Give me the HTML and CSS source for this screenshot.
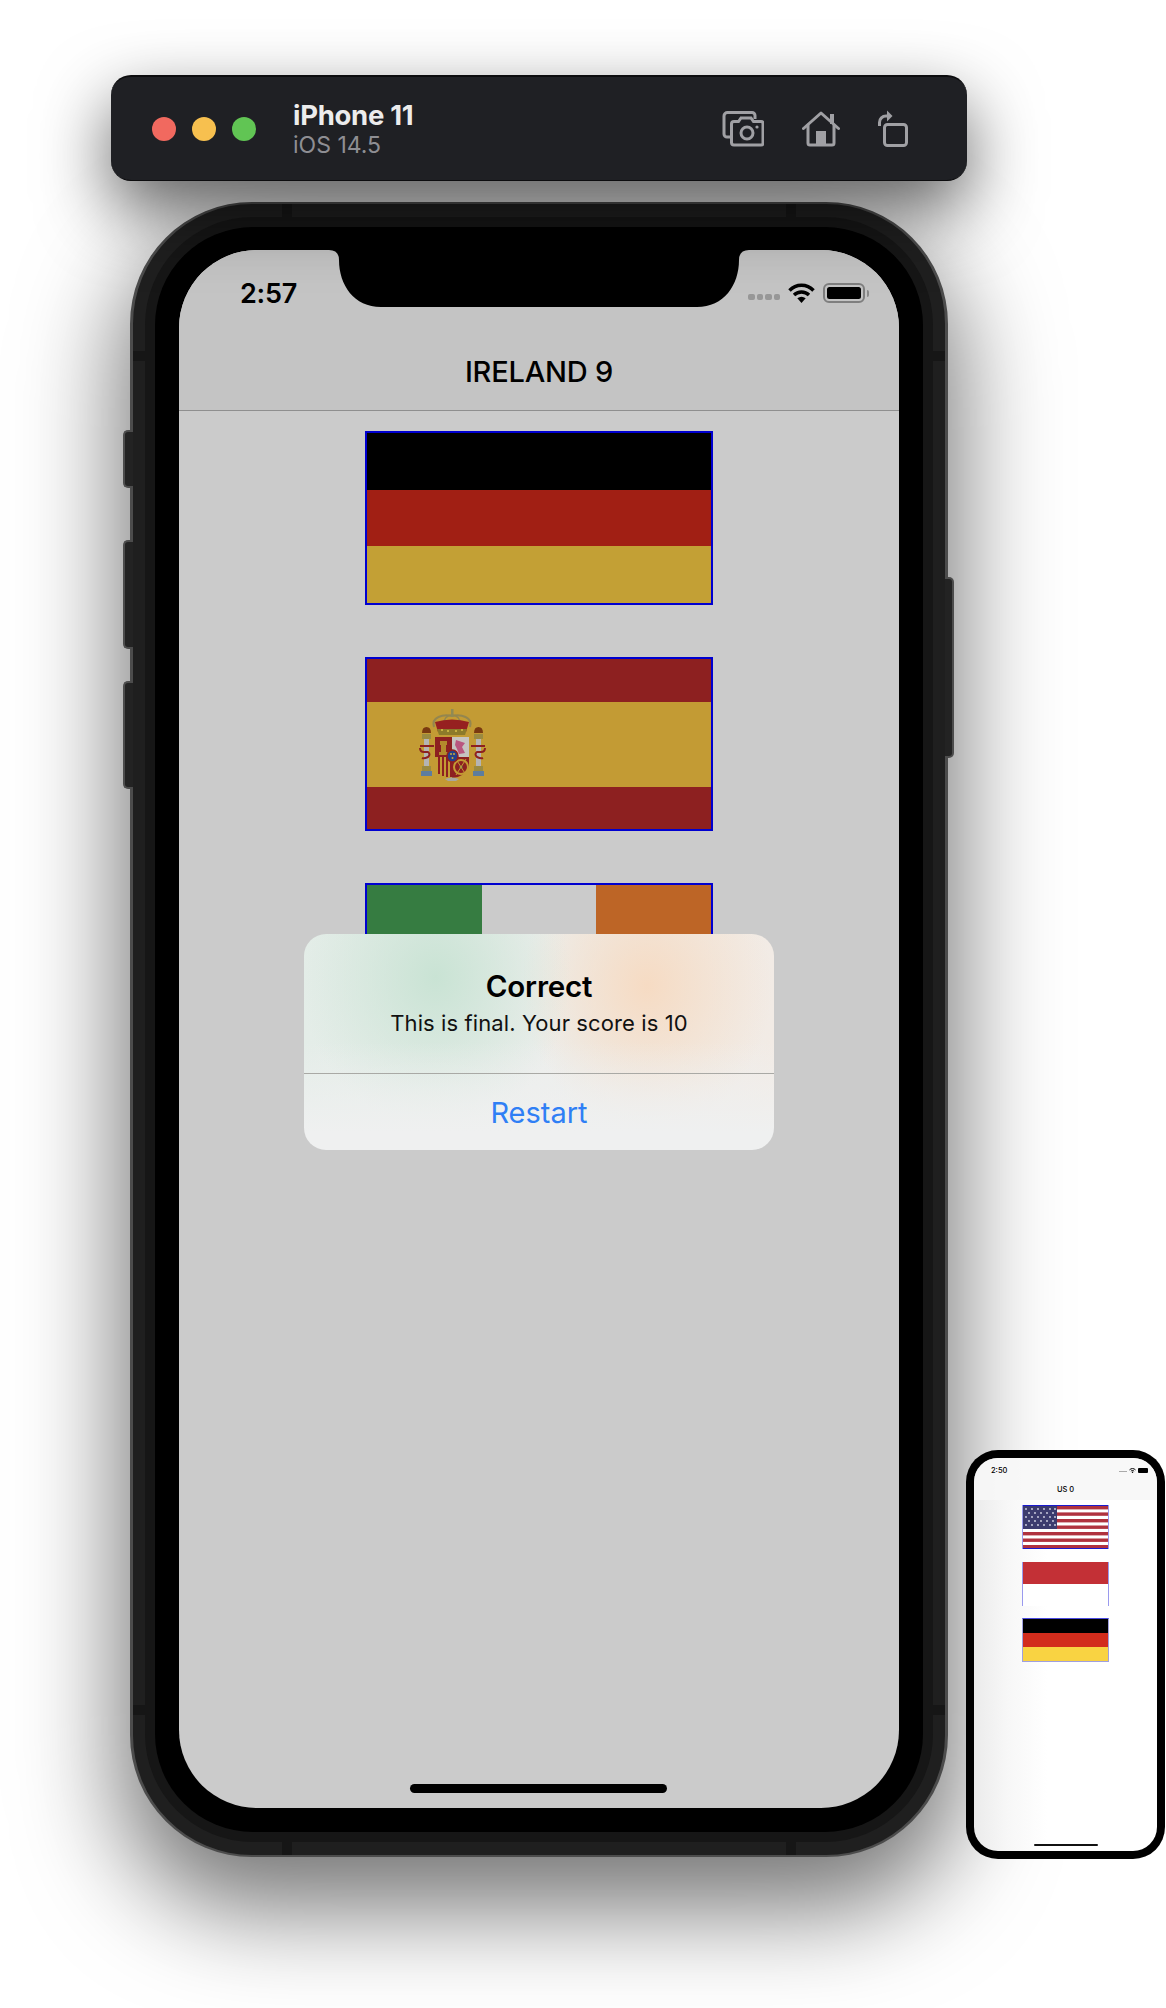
FILE: index.html
```html
<!DOCTYPE html>
<html lang="en">
<head>
<meta charset="utf-8">
<title>iPhone 11 Simulator</title>
<link rel="stylesheet" href="styles.css">
</head>
<body>
<div class="stage">
  <header class="toolbar">
    <div class="lights">
      <span class="light light-red"></span>
      <span class="light light-yellow"></span>
      <span class="light light-green"></span>
    </div>
    <div class="device-name">
      <div class="device-title">iPhone 11</div>
      <div class="device-os">iOS 14.5</div>
    </div>
    <div class="tools">
      <svg class="tool-camera" viewBox="0 0 42 36" width="42" height="36" fill="none" stroke="#a0a0a4" stroke-width="3">
        <path d="M8 26H5a3 3 0 0 1-3-3V5a3.5 3.5 0 0 1 3.5-3.5H30a3 3 0 0 1 3 3V8"/>
        <path d="M12 10.5h4.5l2.5-3.5h10l2.5 3.5H39a2 2 0 0 1 2 2V32a2 2 0 0 1-2 2H12a2.500 2.500 0 0 1-2.500-2.500V13a2.500 2.500 0 0 1 2.500-2.500Z"/>
        <circle cx="25" cy="22" r="6"/>
        <circle cx="35" cy="16" r="1.600" fill="#a0a0a4" stroke="none"/>
      </svg>
      <svg class="tool-home" viewBox="0 0 38 36" width="38" height="36" fill="none" stroke="#a0a0a4" stroke-width="3" stroke-linecap="round" stroke-linejoin="round">
        <path d="M1.500 17.500L19 2l17.500 15.500"/>
        <path d="M6 14v18a2 2 0 0 0 2 2h22a2 2 0 0 0 2-2V14"/>
        <rect x="28" y="3" width="4" height="10" fill="#a0a0a4" stroke="none"/>
        <rect x="14" y="20" width="10" height="14" fill="#a0a0a4" stroke="none"/>
      </svg>
      <svg class="tool-rotate" viewBox="0 0 31 38" width="31" height="38" fill="none" stroke="#a0a0a4" stroke-width="3">
        <rect x="7.500" y="15.500" width="22" height="21" rx="3"/>
        <path d="M2.500 17v-3.500a6.500 6.500 0 0 1 6.500-6.500h2"/>
        <path d="M10 1.500L15.500 7 10 12.500Z" fill="#a0a0a4" stroke="none"/>
      </svg>
    </div>
  </header>

  <div class="phone">
    <span class="btn btn-a"></span>
    <span class="btn btn-b"></span>
    <span class="btn btn-c"></span>
    <span class="btn-right"></span>
    <span class="mark mark-t1"></span>
    <span class="mark mark-t2"></span>
    <span class="mark mark-b1"></span>
    <span class="mark mark-b2"></span>
    <span class="mark-side mark-l1"></span>
    <span class="mark-side mark-l2"></span>
    <span class="mark-side mark-r1"></span>
    <span class="mark-side mark-r2"></span>
    <div class="band">
      <div class="bezel">
        <main class="screen">
          <svg class="notch" viewBox="0 0 420 58" width="420" height="58">
            <path d="M0 0H420Q410 0 410 10C410 35 395 57 368 57H52C25 57 10 35 10 10Q10 0 0 0Z" fill="#000"/>
          </svg>
          <div class="status">
            <span class="time">2:57</span>
            <div class="status-icons">
              <span class="signal"><i></i><i></i><i></i><i></i></span>
              <svg class="wifi" viewBox="0 0 27 20" width="27" height="20" fill="none" stroke="#000" stroke-width="3.400">
                <path d="M1.500 7.500C8 0.500 19 0.500 25.500 7.500"/>
                <path d="M6 12C10 8 17 8 21 12"/>
                <path d="M13.500 20L9.300 15.300Q13.500 12.300 17.700 15.300Z" fill="#000" stroke="none"/>
              </svg>
              <span class="battery"><i></i></span>
              <span class="nub"></span>
            </div>
          </div>
          <div class="nav">IRELAND 9</div>
          <div class="flags">
            <div class="flag flag-de">
              <span class="de-b"></span><span class="de-r"></span><span class="de-y"></span>
            </div>
            <div class="flag flag-es">
              <span class="es-r"></span>
              <span class="es-y">
                <svg class="crest" viewBox="0 0 75 78" width="75" height="78">
                  <path d="M19 20C16 10 28 7 37 9C46 7 58 10 55 20" fill="none" stroke="#94864f" stroke-width="2"/>
                  <path d="M28 19Q29 8 37 8Q45 8 46 19" fill="none" stroke="#94864f" stroke-width="1.500"/>
                  <path d="M20 15Q37 10 54 15L51 25H23Z" fill="#962020"/>
                  <rect x="36" y="2" width="2.500" height="8" fill="#8f8a55"/>
                  <path d="M22 22H52L50 28H24Z" fill="#8c7a2a"/>
                  <g fill="#d8c24a"><circle cx="27" cy="23" r="1"/><circle cx="33" cy="24" r="1"/><circle cx="41" cy="24" r="1"/><circle cx="47" cy="23" r="1"/></g>
                  <rect x="20" y="30" width="17" height="20" fill="#8d2020"/>
                  <rect x="37" y="30" width="17" height="20" fill="#c6c4c0"/>
                  <path d="M20 50H37V71Q26 71 20 60Z" fill="#c39b34"/>
                  <path d="M37 50H54V60Q48 71 37 71Z" fill="#8d2020"/>
                  <g fill="#8d2020"><rect x="23" y="50" width="2" height="17"/><rect x="27" y="50" width="2" height="19"/><rect x="31" y="50" width="2" height="20"/><rect x="35" y="50" width="2" height="20"/></g>
                  <path d="M25 34h7v4h-1v7h2v3h-9v-3h2v-7h-1Z" fill="#b38a2c"/>
                  <path d="M41 33L50 36L47 40L50 46L44 47L42 42L40 38Z" fill="#b9567e"/>
                  <circle cx="46" cy="60" r="7" fill="none" stroke="#c39b34" stroke-width="2"/>
                  <circle cx="46" cy="60" r="1.500" fill="#3a8a70"/>
                  <path d="M41 52L51 68M51 52L41 68" stroke="#c39b34" stroke-width="1"/>
                  <ellipse cx="37.500" cy="49" rx="5.500" ry="6" fill="#24408a" stroke="#8d2020" stroke-width="1.500"/>
                  <g fill="#c9a93a"><circle cx="36" cy="47" r="1"/><circle cx="39" cy="47" r="1"/><circle cx="37.500" cy="51" r="1"/></g>
                  <path d="M30 72Q37 69 44 72L41 74H33Z" fill="#a8a8a0"/>
                  <g>
                    <rect x="9" y="32" width="5" height="32" fill="#b4b4b4"/>
                    <rect x="7" y="27" width="9" height="5" fill="#9a8a40"/>
                    <path d="M7 26Q7 20 11.500 20Q16 20 16 26Z" fill="#7a3a10"/>
                    <rect x="7" y="59" width="9" height="5" fill="#9a8a40"/>
                    <rect x="6" y="64" width="11" height="5" fill="#5d7d9e"/>
                    <path d="M5 39H19M5 41Q5 45 9 45H13Q16 47 13 50Q9 52 7 51" fill="none" stroke="#8d2020" stroke-width="2"/>
                  </g>
                  <g>
                    <rect x="61" y="32" width="5" height="32" fill="#b4b4b4"/>
                    <rect x="59" y="27" width="9" height="5" fill="#9a8a40"/>
                    <path d="M59 26Q59 20 63.500 20Q68 20 68 26Z" fill="#7a3a10"/>
                    <rect x="59" y="59" width="9" height="5" fill="#9a8a40"/>
                    <rect x="58" y="64" width="11" height="5" fill="#5d7d9e"/>
                    <path d="M70 39H56M70 41Q70 45 66 45H62Q59 47 62 50Q66 52 68 51" fill="none" stroke="#8d2020" stroke-width="2"/>
                  </g>
                </svg>
              </span>
              <span class="es-r"></span>
            </div>
            <div class="flag flag-ie">
              <span class="ie-g"></span><span class="ie-w"></span><span class="ie-o"></span>
            </div>
          </div>
          <div class="alert">
            <div class="alert-body">
              <div class="alert-title">Correct</div>
              <div class="alert-msg">This is final. Your score is 10</div>
            </div>
            <div class="alert-action">Restart</div>
          </div>
          <span class="home-bar"></span>
        </main>
      </div>
    </div>
  </div>

  <aside class="mini">
    <div class="mini-screen">
      <div class="mini-top">
        <div class="mini-status">
          <span class="mini-time">2:50</span>
          <span class="mini-icons">
            <span class="mini-signal"></span>
            <svg viewBox="0 0 27 20" width="7" height="5" fill="none" stroke="#000" stroke-width="4"><path d="M1.500 7.500C8 0.500 19 0.500 25.500 7.500"/><path d="M7 13C10 9 17 9 20 13"/><circle cx="13.500" cy="17" r="3" fill="#000" stroke="none"/></svg>
            <span class="mini-batt"></span>
          </span>
        </div>
        <div class="mini-nav">US 0</div>
      </div>
      <div class="mini-flags">
        <svg class="mini-flag mini-us" viewBox="0 0 87 44" width="87" height="44" preserveAspectRatio="none">
          <rect width="87" height="44" fill="#fff"/>
          <g fill="#b0323f">
            <rect y="1" width="87" height="3.400"/><rect y="7.400" width="87" height="3.400"/><rect y="14" width="87" height="3.400"/><rect y="20.500" width="87" height="3.400"/><rect y="27" width="87" height="3.400"/><rect y="33.500" width="87" height="3.400"/><rect y="40" width="87" height="3"/>
          </g>
          <rect x="1" y="1" width="34" height="23" fill="#3c3b6e"/>
          <g fill="#d8d8e8">
            <circle cx="4" cy="4" r=".9"/><circle cx="10" cy="4" r=".9"/><circle cx="16" cy="4" r=".9"/><circle cx="22" cy="4" r=".9"/><circle cx="28" cy="4" r=".9"/><circle cx="33" cy="4" r=".9"/>
            <circle cx="7" cy="8" r=".9"/><circle cx="13" cy="8" r=".9"/><circle cx="19" cy="8" r=".9"/><circle cx="25" cy="8" r=".9"/><circle cx="31" cy="8" r=".9"/>
            <circle cx="4" cy="12" r=".9"/><circle cx="10" cy="12" r=".9"/><circle cx="16" cy="12" r=".9"/><circle cx="22" cy="12" r=".9"/><circle cx="28" cy="12" r=".9"/><circle cx="33" cy="12" r=".9"/>
            <circle cx="7" cy="16" r=".9"/><circle cx="13" cy="16" r=".9"/><circle cx="19" cy="16" r=".9"/><circle cx="25" cy="16" r=".9"/><circle cx="31" cy="16" r=".9"/>
            <circle cx="4" cy="20" r=".9"/><circle cx="10" cy="20" r=".9"/><circle cx="16" cy="20" r=".9"/><circle cx="22" cy="20" r=".9"/><circle cx="28" cy="20" r=".9"/><circle cx="33" cy="20" r=".9"/>
          </g>
          <rect width="87" height="1" fill="#1a1ad0"/>
          <rect y="43" width="87" height="1" fill="#1a1ad0"/>
          <rect width="1" height="44" fill="#9a9aee"/>
          <rect x="86" width="1" height="44" fill="#9a9aee"/>
        </svg>
        <div class="mini-flag mini-id"><span class="id-r"></span><span class="id-w"></span></div>
        <div class="mini-flag mini-de"><span class="mde-b"></span><span class="mde-r"></span><span class="mde-y"></span></div>
      </div>
      <span class="mini-home"></span>
    </div>
  </aside>
</div>
</body>
</html>
```

FILE: styles.css
```css
* { box-sizing: border-box; }
html, body { margin: 0; padding: 0; background: #fff; }
body { font-family: Inter, "Liberation Sans", sans-serif; color: #000; }
.stage { position: relative; width: 1166px; height: 2008px; overflow: hidden; padding: 75px 0 0 0; }

/* Simulator toolbar */
.toolbar {
  position: relative; z-index: 2;
  margin-left: 111px; width: 856px; height: 106px;
  display: flex; align-items: center;
  background: #1f2024; border-radius: 20px;
  border-top: 2px solid #0c0c0e; border-bottom: 1px solid #0c0c0e;
  box-shadow: 0 28px 70px rgba(0,0,0,.62);
  padding-left: 41px;
}
.lights { display: flex; gap: 16px; }
.light { width: 24px; height: 24px; border-radius: 50%; }
.light-red { background: #f1695f; }
.light-yellow { background: #f7c04f; }
.light-green { background: #61c554; }
.device-name { margin-left: 37px; }
.device-title { color: #ececec; font-size: 27.500px; font-weight: 700; line-height: 30px; letter-spacing: -0.3px; }
.device-os { color: #8e8e93; font-size: 23px; font-weight: 400; line-height: 26px; margin-top: 2px; }
.tools { margin-left: auto; display: flex; align-items: center; margin-right: 59px; }
.tools svg { display: block; }
.tool-home { margin-left: 38px; }
.tool-rotate { margin-left: 37px; margin-top: -2px; }

/* Main phone */
.phone {
  position: relative;
  margin: 21px 0 0 130px; width: 818px; height: 1655px;
  padding: 13px 12px;
  background: #1f1f1f;
  border: solid #4c4c4c; border-width: 2px 3px;
  border-radius: 122px;
  box-shadow: 0 42px 100px 10px rgba(0,0,0,.54);
}
.band { background: #161616; border-radius: 108px; padding: 10px; height: 100%; }
.bezel { background: #000; border-radius: 98px; padding: 23px 24px 24px; height: 100%; }
.screen {
  position: relative; overflow: hidden;
  height: 100%; border-radius: 78px;
  background: #cbcbcb;
  display: flex; flex-direction: column;
}
.btn, .btn-right {
  position: absolute; width: 10px;
  background: #232323; border: 2px solid #4c4c4c;
}
.btn { left: -10px; border-radius: 5px 0 0 5px; border-right: 0; }
.btn-a { top: 226px; height: 58px; }
.btn-b { top: 336px; height: 109px; }
.btn-c { top: 477px; height: 108px; }
.btn-right { right: -9px; width: 9px; top: 373px; height: 181px; border-radius: 0 5px 5px 0; border-left: 0; }
.mark { position: absolute; width: 10px; height: 13px; background: #161616; }
.mark-t1 { left: 149px; top: 0; }
.mark-t2 { right: 149px; top: 0; }
.mark-b1 { left: 149px; bottom: 0; }
.mark-b2 { right: 149px; bottom: 0; }
.mark-side { position: absolute; width: 12px; height: 10px; background: #161616; }
.mark-l1 { left: 0; top: 147px; }
.mark-l2 { left: 0; top: 1501px; }
.mark-r1 { right: 0; top: 147px; }
.mark-r2 { right: 0; top: 1501px; }

.notch { position: absolute; top: 0; left: 150px; }
.status {
  flex: none; height: 86px;
  background: #c4c4c4;
  display: flex; align-items: center; justify-content: space-between;
  padding: 0 30px 0 61px;
}
.time { font-size: 27px; font-weight: 600; letter-spacing: -0.2px; }
.status-icons { display: flex; align-items: center; }
.signal { display: flex; gap: 2px; margin: 8px 8px 0 0; }
.signal i { display: block; width: 6.500px; height: 6px; border-radius: 2px; background: #979797; }
.wifi { display: block; }
.battery {
  margin-left: 8px; width: 42px; height: 20px;
  border: 2px solid #7f7f7f; border-radius: 6px; padding: 2px;
  display: block;
}
.battery i { display: block; height: 100%; background: #000; border-radius: 2.500px; }
.nub { width: 2px; height: 7px; margin-left: 2px; background: #8a8a8a; border-radius: 0 2px 2px 0; }
.nav {
  flex: none; height: 75px;
  background: #c4c4c4; border-bottom: 1px solid #8f8f8f;
  display: flex; align-items: center; justify-content: center;
  font-size: 29px; font-weight: 500; letter-spacing: -0.2px; padding-bottom: 3px;
}
.flags { display: flex; flex-direction: column; align-items: center; gap: 52px; padding-top: 20px; }
.flag {
  width: 348px; height: 174px; flex: none;
  border: 2px solid #0000d0;
  display: flex; flex-direction: column;
  background: #cbcbcb;
}
.flag span { display: block; }
.de-b, .de-r, .de-y { flex: 1; }
.de-b { background: #000; }
.de-r { background: #a11f14; }
.de-y { background: #c3a035; }
.es-r { flex: 1; background: #8d2020; }
.es-y { flex: 2; background: #c39b34; position: relative; }
.crest { position: absolute; left: 48px; top: 5px; display: block; }
.flag-ie { flex-direction: row; }
.ie-g, .ie-w, .ie-o { flex: 1; }
.ie-g { background: #367c41; }
.ie-w { background: #cbcbcb; }
.ie-o { background: #bd6526; }

/* Alert */
.alert {
  position: absolute; left: 125px; top: 684px; width: 470px; height: 216px;
  border-radius: 22px; overflow: hidden;
  display: flex; flex-direction: column;
  background:
    linear-gradient(180deg, rgba(238,239,239,0) 50%, #eff0f0 92%),
    radial-gradient(ellipse 135px 150px at 28% 20%, #c9e3d4, rgba(201,227,212,0)),
    radial-gradient(ellipse 125px 145px at 73% 24%, #f6dbc3, rgba(246,219,195,0)),
    linear-gradient(90deg, #e4ede8, #eceeec 50%, #f2ebe5);
}
.alert-body { flex: none; height: 140px; border-bottom: 1px solid #a9a9a5; text-align: center; padding-top: 32px; }
.alert-title { font-size: 29.500px; font-weight: 600; line-height: 40px; letter-spacing: -0.2px; }
.alert-msg { font-size: 22px; line-height: 28px; margin-top: 3px; letter-spacing: 0.1px; color: #111; }
.alert-action { flex: 1; display: flex; align-items: center; justify-content: center; color: #2f7ff5; font-size: 29px; }
.home-bar { position: absolute; left: 231px; bottom: 15px; width: 257px; height: 9px; border-radius: 5px; background: #000; }

/* Small preview phone */
.mini {
  position: absolute; left: 966px; top: 1450px; width: 199px; height: 409px;
  background: #000; border-radius: 32px; padding: 8px;
}
.mini-screen {
  position: relative; height: 100%; overflow: hidden;
  border-radius: 24px;
  background: linear-gradient(90deg, #ebebeb 0, #f7f7f7 18%, #fff 40%);
}
.mini-top { height: 42px; background: rgba(247,247,247,.85); }
.mini-status { height: 23px; display: flex; justify-content: space-between; align-items: center; padding: 2px 9px 0 17px; }
.mini-time { font-size: 7.500px; font-weight: 500; }
.mini-icons { display: flex; align-items: center; gap: 2px; }
.mini-signal { width: 8px; height: 1px; background: #aaa; margin-top: 2px; }
.mini-batt { width: 10px; height: 5px; background: #000; border-radius: 1px; }
.mini-nav { text-align: center; font-size: 7.500px; font-weight: 500; line-height: 10px; margin-top: 4px; }
.mini-flags { display: flex; flex-direction: column; align-items: center; gap: 12.500px; padding-top: 5px; }
.mini-flag { display: flex; flex-direction: column; width: 87px; height: 44px; flex: none; }
.mini-id { border: solid #9a9aee; border-width: 0 1px; background: #fff; }
.id-r { flex: 1; background: #c33036; }
.id-w { flex: 1; background: #fff; }
.mini-de { border: 1px solid #a0a0e0; border-top-color: #4a4ae0; }
.mde-b { flex: 1; background: #000; }
.mde-r { flex: 1; background: #d22c1c; }
.mde-y { flex: 1; background: #f9d342; }
.mini-home { position: absolute; left: 60px; bottom: 5px; width: 64px; height: 2px; background: #111; border-radius: 1px; }
```
